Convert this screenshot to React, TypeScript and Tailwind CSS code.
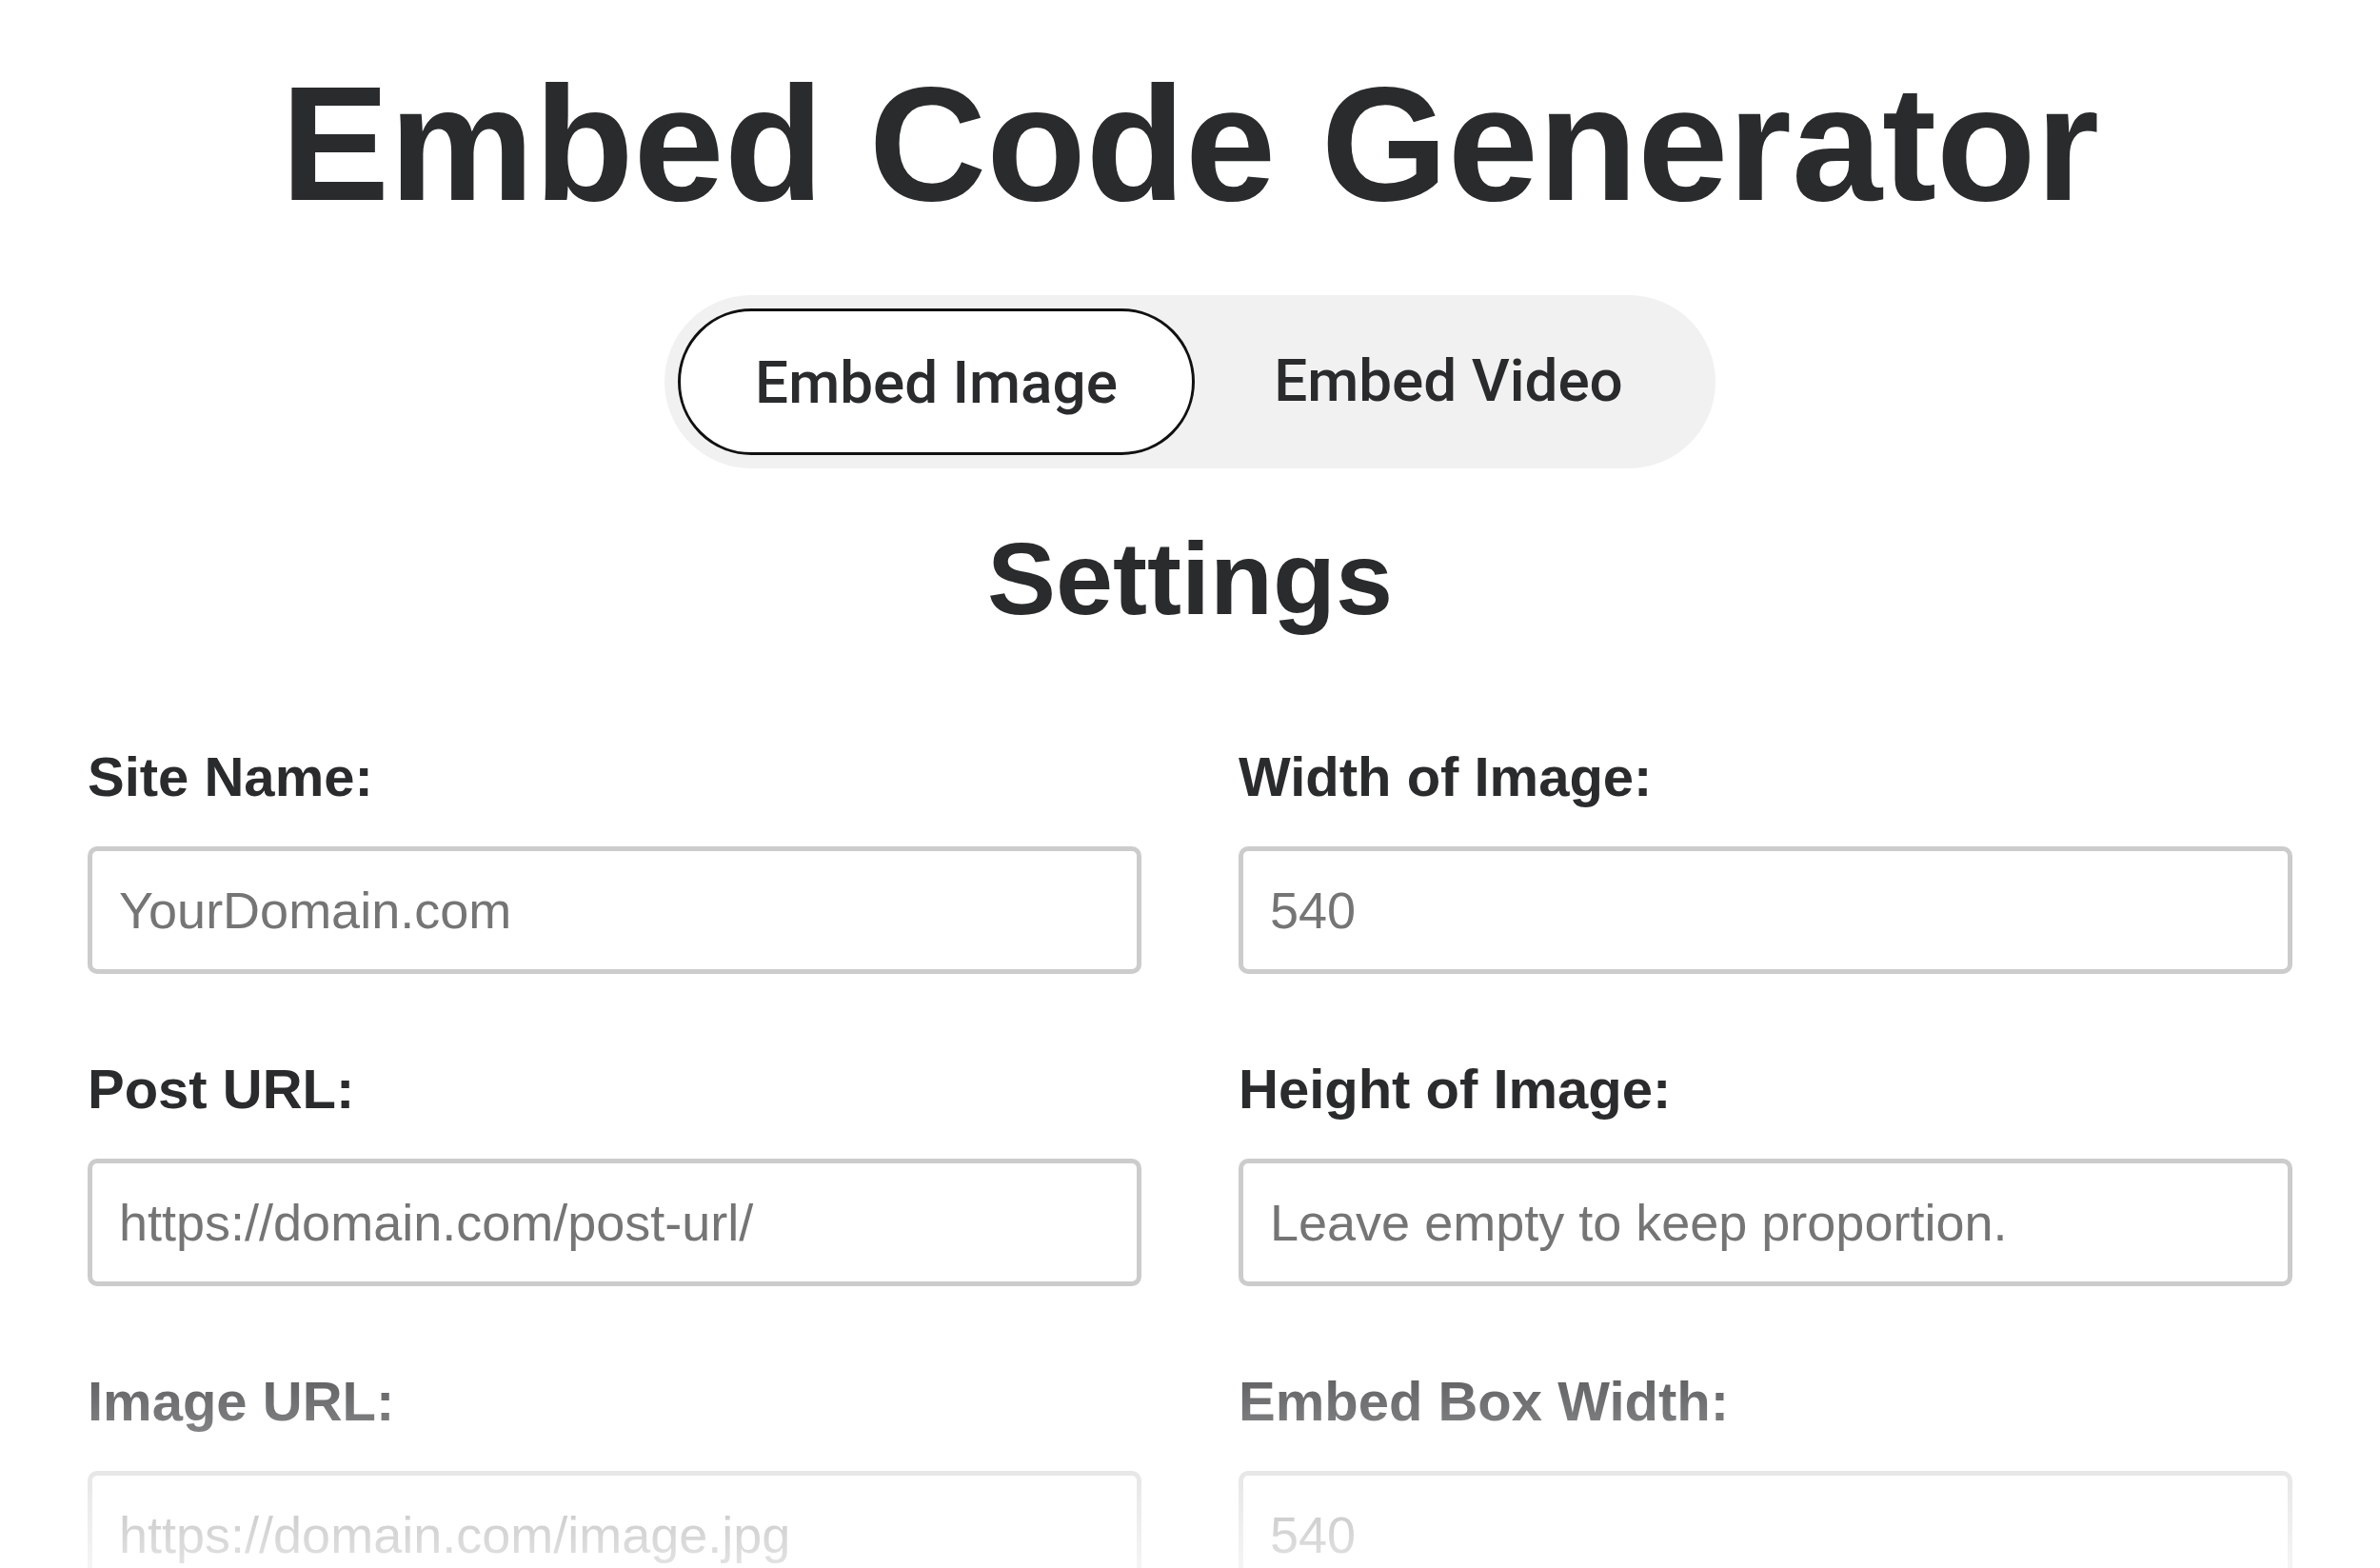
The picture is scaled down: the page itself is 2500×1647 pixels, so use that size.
import React from "react";

const fields: { label: string; placeholder: string }[][] = [
  [
    { label: "Site Name:", placeholder: "YourDomain.com" },
    { label: "Width of Image:", placeholder: "540" },
  ],
  [
    { label: "Post URL:", placeholder: "https://domain.com/post-url/" },
    { label: "Height of Image:", placeholder: "Leave empty to keep proportion." },
  ],
  [
    { label: "Image URL:", placeholder: "https://domain.com/image.jpg" },
    { label: "Embed Box Width:", placeholder: "540" },
  ],
];

function Field({ label, placeholder }: { label: string; placeholder: string }) {
  return (
    <div className="flex flex-col">
      <label className="text-[58px] leading-none font-bold text-[#2a2b2d] pt-[1px]">{label}</label>
      <input
        type="text"
        placeholder={placeholder}
        className="mt-[44px] w-full h-[134px] border-[5px] border-[#cccccc] rounded-[10px] pl-[28px] pr-[28px] text-[54px] text-[#2a2b2d] placeholder:text-[#757575] bg-white outline-none"
      />
    </div>
  );
}

export default function App() {
  return (
    <div className="relative w-full h-[1647px] overflow-hidden bg-white font-['Liberation_Sans',Arial,sans-serif] text-[#2a2b2d]">
      <div className="flex flex-col items-center pt-[65px]">
        <h1 className="text-[171px] leading-none font-bold text-[#2a2b2d] whitespace-nowrap">
          Embed Code Generator
        </h1>

        <div className="mt-[74px] w-[1104px] h-[182px] rounded-full bg-[#f1f1f1] p-[14px] grid grid-cols-[543px_1fr]">
          <button className="h-full rounded-full bg-white border-[3px] border-[#111111] flex items-center justify-center text-[62px] font-['Roboto',sans-serif] font-medium text-[#2a2b2d]">
            Embed Image
          </button>
          <button className="h-full rounded-full flex items-center justify-center pb-[4px] text-[62px] font-['Roboto',sans-serif] font-medium text-[#2a2b2d]">
            Embed Video
          </button>
        </div>

        <h2 className="mt-[62px] text-[108px] leading-none font-bold text-[#2a2b2d]">Settings</h2>
      </div>

      <div className="mt-[124px] px-[92px] grid grid-cols-2 gap-x-[102px] gap-y-[91px]">
        {fields.flat().map((f) => (
          <Field key={f.label} label={f.label} placeholder={f.placeholder} />
        ))}
      </div>

      <div className="pointer-events-none absolute left-0 right-0 bottom-0 h-[297px] bg-gradient-to-b from-white/0 to-white/80" />
    </div>
  );
}
